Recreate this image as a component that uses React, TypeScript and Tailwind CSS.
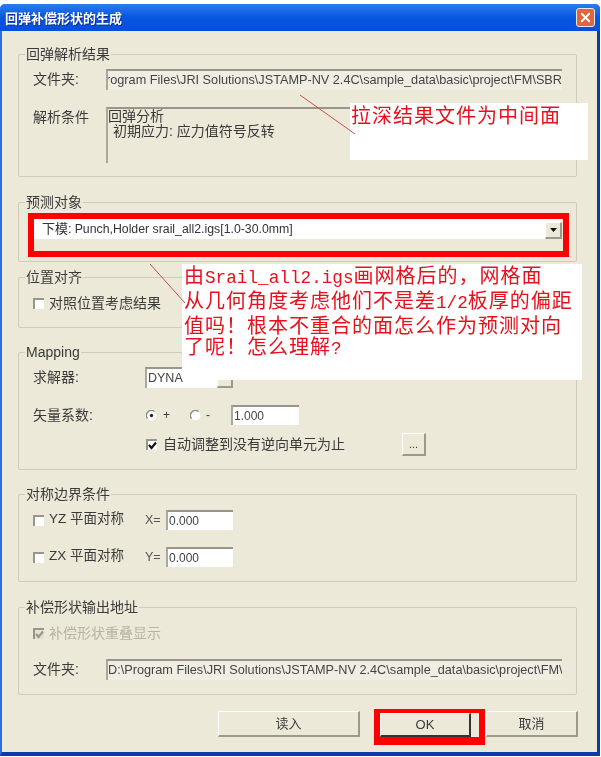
import React from "react";
import { X } from "lucide-react";

const uiFont = "font-['Liberation_Sans','Noto_Sans_CJK_SC',sans-serif]";
const cjkFont = "font-['Noto_Sans_CJK_SC',sans-serif]";
const PATH = "D:\\Program Files\\JRI Solutions\\JSTAMP-NV 2.4C\\sample_data\\basic\\project\\FM\\SBR";
const PATH2 = "D:\\Program Files\\JRI Solutions\\JSTAMP-NV 2.4C\\sample_data\\basic\\project\\FM\\";
const COMMA = "\uFF0C";
const BANG = "\uFF01";

function Group({ title, className, children }: { title: string; className: string; children: React.ReactNode }) {
  return (
    <section className={`relative box-border w-[559px] rounded-[2px] border border-[#cfccba] ${className}`}>
      <h2 className="absolute left-[6px] top-[-9px] bg-[#ece9d8] px-[1px] text-[14px] leading-[16px] font-normal text-[#3a3a3a]">
        {title}
      </h2>
      {children}
    </section>
  );
}

function Sunken({ className, children }: { className: string; children?: React.ReactNode }) {
  return (
    <div className={`box-border overflow-hidden border-t-2 border-l-2 border-t-[#98968a] border-l-[#aaa89c] ${className}`}>
      {children}
    </div>
  );
}

function PathField({ value, align }: { value: string; align: string }) {
  return (
    <Sunken className={`flex h-[21px] min-w-0 flex-1 items-center bg-[#f0eee3] ${align}`}>
      <span className="shrink-0 text-[12.7px] whitespace-nowrap text-[#444]">{value}</span>
    </Sunken>
  );
}

function NumberField({ value, className }: { value: string; className: string }) {
  return (
    <Sunken className={`flex h-[20px] items-center bg-white pl-[1px] text-[12px] text-[#444] ${className}`}>{value}</Sunken>
  );
}

function Check({ checked, disabled }: { checked?: boolean; disabled?: boolean }) {
  return (
    <span
      className={`box-border flex h-[11px] w-[11px] shrink-0 items-center justify-center border-t-2 border-l-2 border-t-[#98968a] border-l-[#98968a] ${disabled ? "bg-[#e4e1d2]" : "bg-white"}`}
    >
      {checked && (
        <svg width="9" height="9" viewBox="0 0 9 9">
          <path d="M1 4l2.5 3L8 1.5" fill="none" stroke={disabled ? "#9a9888" : "#111"} strokeWidth="2.2" />
        </svg>
      )}
    </span>
  );
}

function Radio({ on }: { on?: boolean }) {
  return (
    <svg width="11" height="11" viewBox="0 0 11 11" className="shrink-0">
      <circle cx="5.5" cy="5.5" r="5" fill="#fff" />
      <path d="M1.5 8.5A5 5 0 0 1 8.5 1.5" fill="none" stroke="#8d8b80" strokeWidth="1.4" />
      {on && <circle cx="5.5" cy="5.5" r="1.7" fill="#222" />}
    </svg>
  );
}

function Btn({ className, children }: { className: string; children: React.ReactNode }) {
  return (
    <button className={`box-border flex items-center justify-center border-t border-l border-t-white border-l-white border-r-2 border-b-2 border-r-[#9b9988] border-b-[#9b9988] bg-[#ece9d8] text-[#3a3a3a] ${className}`}>
      {children}
    </button>
  );
}

export default function App() {
  return (
    <div className={`relative h-[757px] w-[601px] overflow-hidden bg-white blur-[0.4px] ${uiFont}`}>
      <div className="mt-[4px] box-border flex h-[752px] w-[600px] flex-col rounded-t-[5px] border-r-[3px] border-b-[4px] border-l-[2px] border-r-[#0a3cae] border-b-[#0a3cae] border-l-[#2f6ce0] bg-[#ece9d8]">
        {/* title bar */}
        <header className="-ml-[2px] -mr-[3px] flex h-[27px] shrink-0 items-center justify-between rounded-t-[5px] bg-gradient-to-b from-[#2a7cf0] via-[#0756e0] to-[#0450dc] pr-[5px] pl-[5px]">
          <span className={`text-[13px] font-bold text-white [text-shadow:1px_1px_#0a2f90] ${cjkFont}`}>回弹补偿形状的生成</span>
          <span className="flex h-[19px] w-[19px] items-center justify-center rounded-[3px] border border-[#e8e8f0] bg-[#e0643c]">
            <X size={15} strokeWidth={3} color="#fff" />
          </span>
        </header>

        <main className="flex flex-col pl-[16px]">
          <Group title="回弹解析结果" className="mt-[23px] h-[123px] px-[14px] pt-[14px]">
            <div className="flex items-center">
              <span className="w-[73px] shrink-0 text-[14px] text-[#3a3a3a]">文件夹:</span>
              <PathField value={PATH} align="justify-end" />
            </div>
            <div className="mt-[17px] flex items-start">
              <span className="w-[73px] shrink-0 text-[14px] leading-[20px] text-[#3a3a3a]">解析条件</span>
              <Sunken className="h-[56px] flex-1 bg-[#ece9d8] text-[14px] leading-[15px] text-[#3a3a3a]">
                <div>回弹分析</div>
                <div className="pl-[5px]">初期应力: 应力值符号反转</div>
              </Sunken>
            </div>
          </Group>

          <Group title="预测对象" className="mt-[25px] h-[60px] px-[14px] pt-[16px]">
            <div className="flex h-[20px] items-center bg-white pl-[9px] text-[12.3px] text-[#333]">
              <span className="text-[13px]">下模:</span>
              <span className="ml-[3px] flex-1">Punch,Holder srail_all2.igs[1.0-30.0mm]</span>
              <Btn className="mt-[3px] h-[17px] w-[17px]">
                <svg width="7" height="4" viewBox="0 0 7 4">
                  <path d="M0 0h7L3.5 4z" fill="#111" />
                </svg>
              </Btn>
            </div>
          </Group>

          <Group title="位置对齐" className="mt-[15px] h-[51px] pl-[14px] pt-[18px]">
            <div className="flex h-[14px] items-center gap-[5px] text-[14px] text-[#3a3a3a]">
              <Check />
              <span>对照位置考虑结果</span>
            </div>
          </Group>

          <Group title="Mapping" className="mt-[24px] h-[118px] pl-[14px] pt-[14px]">
            <div className="flex h-[21px] items-center text-[14px] text-[#3a3a3a]">
              <span className="w-[112px]">求解器:</span>
              <Sunken className="flex h-[21px] w-[88px] items-center justify-between bg-white pl-[1px] text-[12.5px] text-[#444]">
                DYNA
                <Btn className="mt-[10px] h-[9px] w-[16px]"> </Btn>
              </Sunken>
            </div>
            <div className="mt-[17px] flex h-[20px] items-center text-[14px] text-[#3a3a3a]">
              <span className="w-[113px]">矢量系数:</span>
              <Radio on />
              <span className="ml-[6px] w-[27px] text-[12px]">+</span>
              <Radio />
              <span className="ml-[5px] w-[25px] text-[12px]">-</span>
              <NumberField value="1.000" className="w-[68px]" />
            </div>
            <div className="mt-[8px] ml-[113px] flex h-[23px] items-center">
              <div className="flex w-[256px] items-center gap-[6px] text-[14px] text-[#3a3a3a]">
                <Check checked />
                <span>自动调整到没有逆向单元为止</span>
              </div>
              <Btn className="h-[23px] w-[24px] text-[11px]">...</Btn>
            </div>
          </Group>

          <Group title="对称边界条件" className="mt-[24px] h-[88px] pl-[14px] pt-[15px]">
            {[
              { plane: "YZ 平面对称", axis: "X=", gap: "" },
              { plane: "ZX 平面对称", axis: "Y=", gap: "mt-[17px]" },
            ].map((row) => (
              <div key={row.axis} className={`flex h-[20px] items-center text-[14px] text-[#3a3a3a] ${row.gap}`}>
                <Check />
                <span className="ml-[5px] w-[96px] pb-[2px] text-[13.5px]">{row.plane}</span>
                <span className="w-[21px] text-[12.5px] text-[#555]">{row.axis}</span>
                <NumberField value="0.000" className="w-[67px]" />
              </div>
            ))}
          </Group>

          <Group title="补偿形状输出地址" className="mt-[25px] h-[88px] px-[14px] pt-[18px]">
            <div className="flex h-[14px] items-center gap-[5px] text-[14px] text-[#b5b3a6]">
              <Check checked disabled />
              <span>补偿形状重叠显示</span>
            </div>
            <div className="mt-[19px] flex items-center">
              <span className="w-[73px] shrink-0 text-[14px] text-[#3a3a3a]">文件夹:</span>
              <PathField value={PATH2} align="justify-start" />
            </div>
          </Group>

          <footer className="mt-[16px] ml-[200px] flex items-start text-[13px]">
            <Btn className="h-[26px] w-[142px]">读入</Btn>
            <Btn className="mt-[2px] ml-[20px] h-[24px] w-[91px] border-r-[#333] border-b-[#333]">OK</Btn>
            <Btn className="ml-[15px] h-[26px] w-[92px]">取消</Btn>
          </footer>
        </main>
      </div>

      {/* annotations pasted over the dialog */}
      <div className={`absolute top-[103px] left-[350px] h-[57px] w-[238px] bg-white pl-[1px] text-[20px] leading-[24px] tracking-[1px] text-[#e8101c] ${cjkFont}`}>
        拉深结果文件为中间面
      </div>
      <div className={`absolute top-[264px] left-[182px] h-[116px] w-[400px] bg-white pl-[2px] text-[20px] leading-[21px] tracking-[1px] text-[#e8101c] ${cjkFont}`}>
        <div className="whitespace-nowrap">
          由<span className="font-['Liberation_Mono'] text-[17.7px] tracking-normal">Srail_all2.igs</span>画网格后的{COMMA}网格面
        </div>
        <div className="whitespace-nowrap">
          从几何角度考虑他们不是差<span className="font-['Liberation_Mono'] text-[17.7px] tracking-normal">1/2</span>板厚的偏距
        </div>
        <div className="whitespace-nowrap">值吗{BANG}根本不重合的面怎么作为预测对向</div>
        <div className="whitespace-nowrap">
          了呢{BANG}怎么理解<span className="font-['Liberation_Mono'] text-[17.7px] tracking-normal">?</span>
        </div>
      </div>
      <svg className="absolute top-0 left-0" width="601" height="757" fill="none" stroke="#c8504f" strokeWidth="1">
        <path d="M300 95L355 134" />
        <path d="M150 264L185 303" />
      </svg>
      <div className="absolute top-[213px] left-[28px] h-[44px] w-[541px] border-[6px] border-[#f00]" />
      <div className="absolute top-[709px] left-[374px] h-[36px] w-[111px] border-x-[6px] border-t-[4px] border-b-[8px] border-[#f00]" />
    </div>
  );
}
